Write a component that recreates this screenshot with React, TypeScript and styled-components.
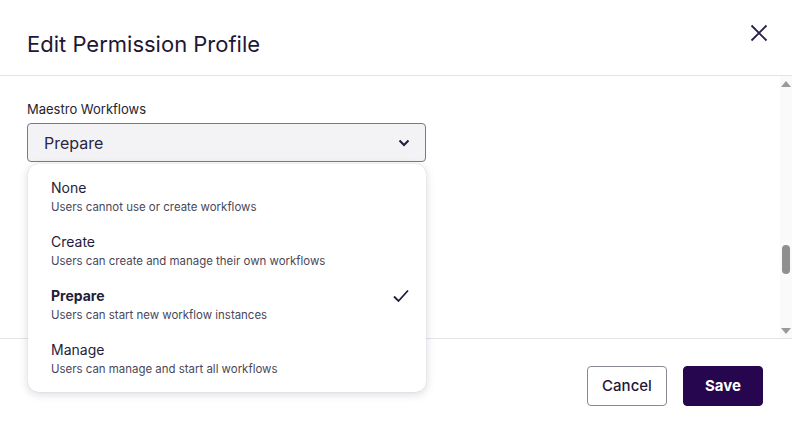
import styled, { createGlobalStyle } from "styled-components";

const GlobalStyle = createGlobalStyle`
  html, body {
    margin: 0;
    padding: 0;
    background: #fff;
  }
  body {
    font-family: "Inter", "Noto Sans", sans-serif;
    color: #1f1738;
  }
  * { box-sizing: border-box; }
`;

const Dialog = styled.div`
  width: 792px;
  height: 432px;
  display: flex;
  flex-direction: column;
  background: #fff;
  overflow: hidden;
  position: relative;
`;

const Header = styled.div`
  height: 76px;
  display: flex;
  justify-content: space-between;
  align-items: flex-start;
  padding: 28px 24px 0 27px;
  border-bottom: 1px solid #e4e4e8;
`;

const Title = styled.h1`
  margin: 0;
  font-size: 22px;
  line-height: 32px;
  font-weight: 400;
  color: #1e1736;
`;

const CloseButton = styled.button`
  border: 0;
  background: none;
  padding: 0;
  width: 18px;
  height: 18px;
  margin-top: -4px;
  color: #2a1d4d;
  cursor: pointer;
`;

const Body = styled.div`
  flex: 1;
  position: relative;
  padding: 24px 27px 0 27px;
`;

const Label = styled.div`
  font-size: 13px;
  line-height: 18px;
  color: #26232f;
  margin-bottom: 5px;
`;

const Field = styled.div`
  position: relative;
  width: 399px;
`;

const SelectBox = styled.div`
  height: 39px;
  border: 1px solid #79778a;
  border-radius: 4px;
  background: #f3f3f6;
  display: flex;
  align-items: center;
  justify-content: space-between;
  padding: 0 15px 0 16px;
  font-size: 16px;
  line-height: 20px;
  color: #2b2740;
`;

const Menu = styled.div`
  position: absolute;
  top: 41px;
  left: 1px;
  width: 398px;
  background: #fff;
  border-radius: 10px;
  box-shadow: 0 2px 10px rgba(20, 10, 50, 0.16), 0 0 1px rgba(20, 10, 50, 0.2);
  padding: 6px 0;
  z-index: 5;
`;

const Option = styled.div`
  height: 54px;
  padding: 8px 16px 8px 23px;
  display: flex;
  align-items: center;
  justify-content: space-between;
`;

const OptionText = styled.div`
  display: flex;
  flex-direction: column;
`;

const OptionTitle = styled.div<{ $selected?: boolean }>`
  font-size: 14px;
  line-height: 20px;
  font-weight: ${p => (p.$selected ? 650 : 400)};
  color: #231c3a;
`;

const OptionDesc = styled.div`
  font-size: 11.45px;
  line-height: 18px;
  color: #4a4658;
`;

const Check = styled.svg`
  width: 18px;
  height: 18px;
  margin-top: -18px;
  color: #231c3a;
`;

const Footer = styled.div`
  height: 94px;
  border-top: 1px solid #e4e4e8;
  display: flex;
  justify-content: flex-end;
  align-items: center;
  gap: 16px;
  padding: 0 29px 0 0;
`;

const Button = styled.button<{ $primary?: boolean }>`
  width: 80px;
  height: 40px;
  border-radius: 4px;
  font-family: inherit;
  font-size: 15px;
  font-weight: ${p => (p.$primary ? 700 : 500)};
  border: 1px solid ${p => (p.$primary ? "#26064f" : "#8b8896")};
  background: ${p => (p.$primary ? "#26064f" : "#fff")};
  color: ${p => (p.$primary ? "#fff" : "#1f1738")};
  cursor: pointer;
`;

const ScrollTrack = styled.div`
  position: absolute;
  top: 0;
  right: 0;
  bottom: 0;
  width: 12px;
  background: #fafafa;
  display: flex;
  flex-direction: column;
  align-items: center;
  padding: 5px 0 4px;
`;

const Arrow = styled.div<{ $down?: boolean }>`
  width: 0;
  height: 0;
  border-left: 5px solid transparent;
  border-right: 5px solid transparent;
  ${p =>
    p.$down
      ? "border-top: 6px solid #9a9a9a;"
      : "border-bottom: 6px solid #9a9a9a;"}
`;

const ThumbArea = styled.div`
  flex: 1;
  width: 100%;
  position: relative;
`;

const Thumb = styled.div`
  position: absolute;
  top: 158px;
  left: 2px;
  width: 8px;
  height: 29px;
  border-radius: 4px;
  background: #8f8f8f;
`;

const options = [
  { title: "None", desc: "Users cannot use or create workflows" },
  { title: "Create", desc: "Users can create and manage their own workflows" },
  { title: "Prepare", desc: "Users can start new workflow instances", selected: true },
  { title: "Manage", desc: "Users can manage and start all workflows" },
];

export default function App() {
  return (
    <>
      <GlobalStyle />
      <Dialog>
        <Header>
          <Title>Edit Permission Profile</Title>
          <CloseButton aria-label="Close">
            <svg width="18" height="18" viewBox="0 0 18 18" fill="none">
              <path d="M1.5 1.5 L16.5 16.5 M16.5 1.5 L1.5 16.5" stroke="currentColor" strokeWidth="1.8" />
            </svg>
          </CloseButton>
        </Header>
        <Body>
          <Label>Maestro Workflows</Label>
          <Field>
            <SelectBox>
              <span>Prepare</span>
              <svg width="12" height="8" viewBox="0 0 12 8" fill="none">
                <path d="M1.5 1.5 L6 6 L10.5 1.5" stroke="#231c3a" strokeWidth="2" />
              </svg>
            </SelectBox>
            <Menu>
              {options.map(o => (
                <Option key={o.title}>
                  <OptionText>
                    <OptionTitle $selected={o.selected}>{o.title}</OptionTitle>
                    <OptionDesc>{o.desc}</OptionDesc>
                  </OptionText>
                  {o.selected && (
                    <Check viewBox="0 0 18 18" fill="none">
                      <path d="M2 9.5 L6.5 14 L16 3.5" stroke="currentColor" strokeWidth="1.8" />
                    </Check>
                  )}
                </Option>
              ))}
            </Menu>
          </Field>
          <ScrollTrack>
            <Arrow />
            <ThumbArea>
              <Thumb />
            </ThumbArea>
            <Arrow $down />
          </ScrollTrack>
        </Body>
        <Footer>
          <Button>Cancel</Button>
          <Button $primary>Save</Button>
        </Footer>
      </Dialog>
    </>
  );
}
